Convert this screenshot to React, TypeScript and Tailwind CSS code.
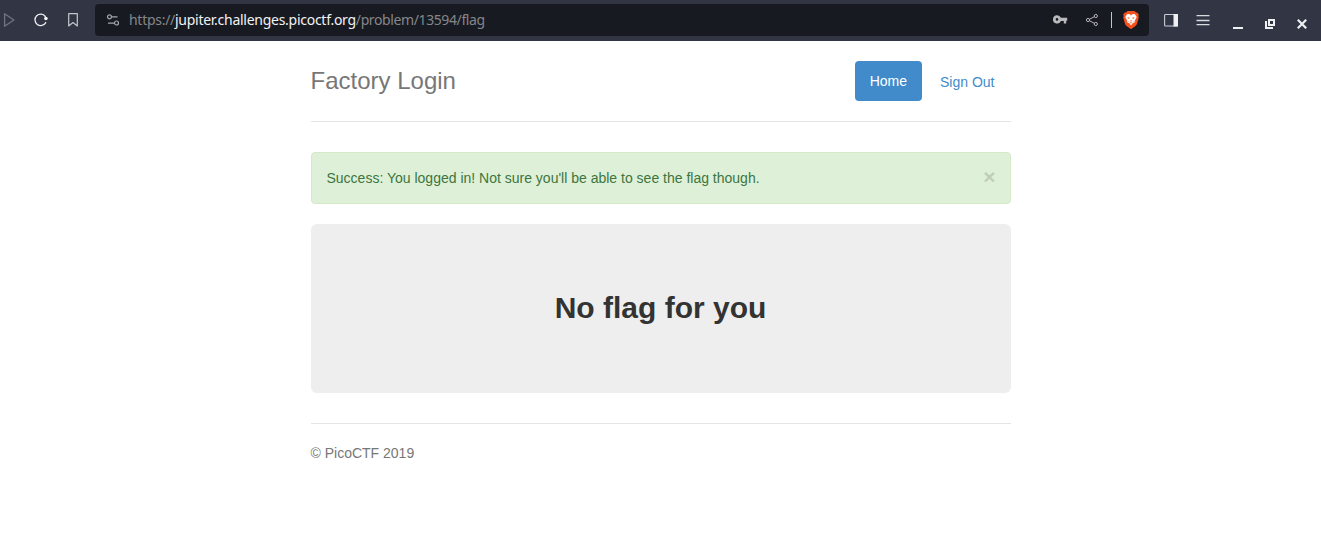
import React from "react";

function ReloadIcon() {
  return (
    <svg width="16" height="16" viewBox="0 0 16 16" fill="none" stroke="#eef0f2" strokeWidth="1.3">
      <path d="M12.7 10.6A5.7 5.7 0 1 1 12.3 4.5" strokeLinecap="round" />
      <circle cx="12.9" cy="6.5" r="1.8" fill="#f5f6f7" stroke="none" />
    </svg>
  );
}

function SettingsIcon() {
  return (
    <svg width="14" height="14" viewBox="0 0 14 14" fill="none" stroke="#a3a6ac" strokeWidth="1.2">
      <circle cx="3.5" cy="3.8" r="2" />
      <path d="M5.8 3.8h5.7M2 10.100h6" />
      <circle cx="10.5" cy="10" r="2" />
    </svg>
  );
}

function KeyIcon() {
  return (
    <svg width="16" height="12" viewBox="0 0 16 12" fill="#b9babc">
      <path
        fillRule="evenodd"
        d="M5 1.3a4.1 4.1 0 0 1 3.9 2.5H15.2v2.9h-1v2.7h-2.4V6.9H8.9A4.1 4.1 0 1 1 5 1.3Zm0 2.8a1.3 1.3 0 1 0 0 2.6 1.3 1.3 0 0 0 0-2.6Z"
      />
    </svg>
  );
}

function ShareIcon() {
  return (
    <svg width="14" height="14" viewBox="0 0 14 14" fill="none" stroke="#b3b4b6" strokeWidth="1">
      <circle cx="3" cy="7" r="1.6" />
      <circle cx="10.8" cy="3" r="1.6" />
      <circle cx="10.8" cy="11" r="1.6" />
      <path d="M4.4 6.3 9.4 3.7M4.4 7.7l5 2.6" />
    </svg>
  );
}

function BraveIcon() {
  return (
    <svg width="16" height="18" viewBox="0 0 16 18">
      <path
        fill="#f4511e"
        d="M4.5 0h7l1.4 1.5 1.3-.1L15.8 3.6l-.5 1.3.5 1.5-1.8 6.4c-.3 1-.8 1.7-1.6 2.3L9 17.5c-.7.5-1.3.5-2 0L3.6 15.1C2.8 14.5 2.3 13.8 2 12.8L.2 6.4l.5-1.5L.2 3.6 1.8 1.4l1.3.1Z"
      />
      <path
        fill="#fff"
        d="M4 3.2 6 3 8 3.5 10 3l2 .2 1.7 2.7-1.7 3.3.2 1.7-2.3 1.3L8 14.3l-1.9-2.1L3.8 10.9 4 9.2 2.3 5.9Z"
      />
      <path
        fill="#f4511e"
        d="M4.4 6.2l2.4.5-.6 1.1-1.2-.4ZM11.6 6.2l-2.4.5.6 1.1 1.2-.4ZM6.6 3.3h2.8L8 4.4ZM6.8 9.6h2.4L8 10.7ZM4.6 9.4l1.3 1.5-1.3-.2ZM11.4 9.4l-1.3 1.5 1.3-.2Z"
      />
      <path stroke="#f4511e" strokeWidth=".7" d="M6.3 12.3 8 11.5l1.7.8" fill="none" />
    </svg>
  );
}

function WindowControls() {
  return (
    <div className="ml-[23px] flex items-center gap-[22px] pt-2">
      <svg width="10" height="12" viewBox="0 0 10 12" fill="#eef0f2">
        <path d="M0 9h10v2H0z" />
      </svg>
      <svg width="10" height="12" viewBox="0 0 10 12" fill="#eef0f2">
        <path fillRule="evenodd" d="M3 1h7v7H3zM5 3v3h3V3zM0 3h2v6h6v2H0z" />
      </svg>
      <svg width="10" height="12" viewBox="0 0 10 12" stroke="#eef0f2" strokeWidth="2.2">
        <path d="m.8 1.8 8.4 8.4M9.2 1.8.8 10.2" />
      </svg>
    </div>
  );
}

function BrowserBar() {
  return (
    <header className="flex h-[41px] items-start bg-[#323544] pt-1 font-['Noto_Sans',sans-serif]">
      <div className="flex h-8 w-[95px] shrink-0 items-center">
        <svg className="ml-[3px]" width="13" height="16" viewBox="0 0 13 16" fill="none" stroke="#72757f" strokeWidth="1.3">
          <path d="M1.6 1.8v12.4L10.9 8Z" strokeLinejoin="round" />
        </svg>
        <span className="ml-[17px]">
          <ReloadIcon />
        </span>
        <svg className="ml-[18px]" width="12" height="16" viewBox="0 0 12 16" fill="none" stroke="#c5c7cc" strokeWidth="1.2">
          <path d="M1.7 1.7h8.6v12.2L6 10.6l-4.3 3.3Z" strokeLinejoin="round" />
        </svg>
      </div>
      <div className="flex h-8 w-[1054px] shrink-0 items-center rounded bg-[#181a21] pl-[11px] pr-[10px]">
        <SettingsIcon />
        <p className="ml-[9px] whitespace-nowrap text-[14px] leading-8 text-[#85868a]">
          <span className="tracking-[-0.28px]">https://</span>
          <span className="tracking-[-0.27px] text-[#f2f2f3]">jupiter.challenges.picoctf.org</span>
          <span className="tracking-[-0.39px]">/problem/13594/flag</span>
        </p>
        <div className="ml-auto flex items-center">
          <KeyIcon />
          <span className="ml-[17px]">
            <ShareIcon />
          </span>
          <div className="ml-3 h-4 w-px bg-[#c5c5c7]" />
          <span className="ml-[11px]">
            <BraveIcon />
          </span>
        </div>
      </div>
      <div className="flex h-8 items-center pl-[15px]">
        <svg width="14" height="14" viewBox="0 0 14 14">
          <rect x=".6" y="1.5" width="12.8" height="11.5" rx=".8" fill="none" stroke="#c9cbd0" strokeWidth="1.1" />
          <path d="M9.5 1h4.5v12.5H9.5z" fill="#eef0f2" />
        </svg>
        <svg className="ml-[18px]" width="14" height="14" viewBox="0 0 14 14" stroke="#d8dadd" strokeWidth="1.3">
          <path d="M.5 2.7h13M.5 7.5h13M.5 11.7h13" />
        </svg>
        <WindowControls />
      </div>
    </header>
  );
}

export default function App() {
  return (
    <div className="min-h-[538px] bg-white font-['Liberation_Sans',Arial,sans-serif] text-sm leading-5 text-[#333333]">
      <BrowserBar />
      <main className="mx-auto w-[700px] pt-5">
        <div className="flex h-[61px] items-start justify-between border-b border-[#e5e5e5]">
          <h3 className="text-2xl leading-10 text-[#777777]">Factory Login</h3>
          <nav className="mr-px flex items-start gap-[3px]">
            <a className="rounded bg-[#428bca] px-[15px] py-2.5 text-white">Home</a>
            <a className="mt-px px-[15px] py-2.5 text-[#428bca]">Sign Out</a>
          </nav>
        </div>
        <div className="mt-[30px] flex h-[52px] items-center justify-between rounded border border-[#d6e9c6] bg-[#dff0d8] pl-[15px] pr-[14px] text-[#3c763d]">
          <span>Success: You logged in! Not sure you'll be able to see the flag though.</span>
          <span className="pb-0.5 text-[21px] font-bold leading-5 text-black opacity-[0.14]">×</span>
        </div>
        <section className="mt-5 flex h-[169px] items-center justify-center rounded-md bg-[#eeeeee] pb-0.5">
          <p className="text-[30px] font-bold leading-[42px]">No flag for you</p>
        </section>
        <footer className="mt-[30px] border-t border-[#e5e5e5] pt-[19px] text-[#777777]">© PicoCTF 2019</footer>
      </main>
    </div>
  );
}
